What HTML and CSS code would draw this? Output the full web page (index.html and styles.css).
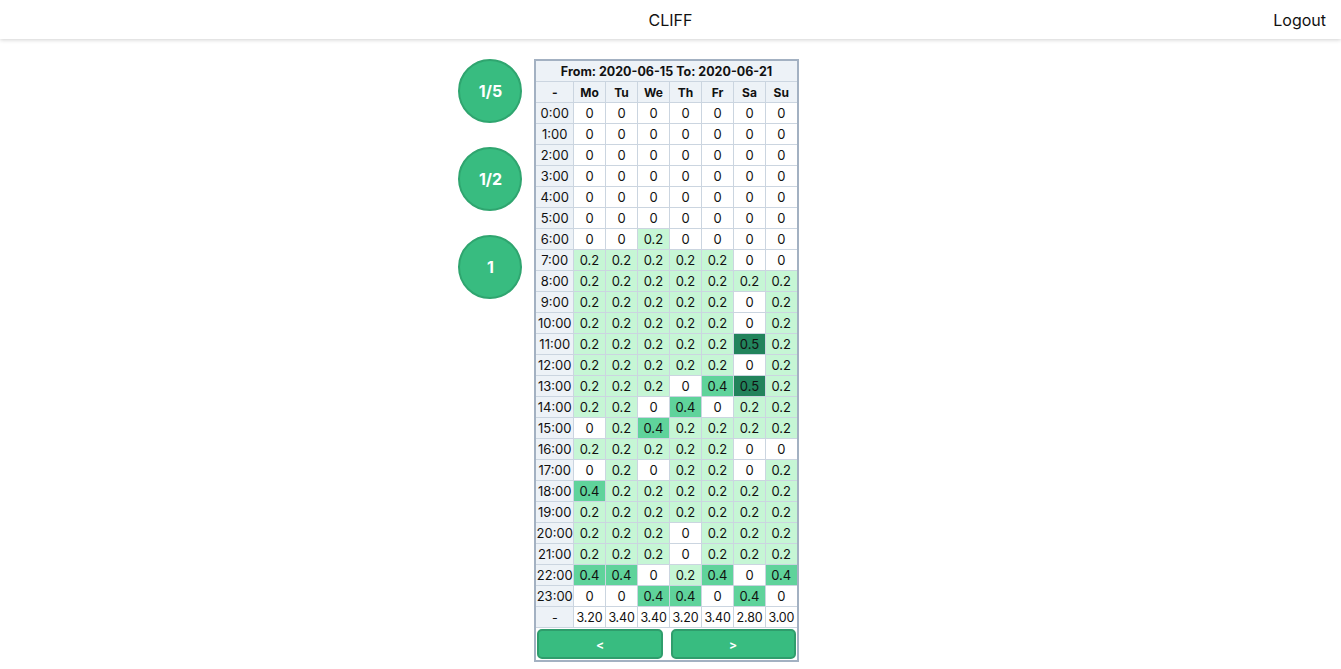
FILE: index.html
```html
<!DOCTYPE html>
<html>
<head>
<meta charset="utf-8">
<link rel="stylesheet" href="styles.css">
</head>
<body>
<header class="topbar">
  <div class="spacer"></div>
  <div class="brand">CLIFF</div>
  <div class="logout">Logout</div>
</header>
<main class="main">
  <div class="circles">
    <div class="circle">1/5</div>
    <div class="circle">1/2</div>
    <div class="circle">1</div>
  </div>
  <table class="grid">
    <colgroup><col class="c-h"><col class="c-d"><col class="c-d"><col class="c-d"><col class="c-d"><col class="c-d"><col class="c-d"><col class="c-d"></colgroup>
    <thead>
      <tr><th colspan="8" class="title">From: 2020-06-15 To: 2020-06-21</th></tr>
      <tr><th>-</th><th>Mo</th><th>Tu</th><th>We</th><th>Th</th><th>Fr</th><th>Sa</th><th>Su</th></tr>
    </thead>
    <tbody>
      <tr><td class="h">0:00</td><td>0</td><td>0</td><td>0</td><td>0</td><td>0</td><td>0</td><td>0</td></tr>
      <tr><td class="h">1:00</td><td>0</td><td>0</td><td>0</td><td>0</td><td>0</td><td>0</td><td>0</td></tr>
      <tr><td class="h">2:00</td><td>0</td><td>0</td><td>0</td><td>0</td><td>0</td><td>0</td><td>0</td></tr>
      <tr><td class="h">3:00</td><td>0</td><td>0</td><td>0</td><td>0</td><td>0</td><td>0</td><td>0</td></tr>
      <tr><td class="h">4:00</td><td>0</td><td>0</td><td>0</td><td>0</td><td>0</td><td>0</td><td>0</td></tr>
      <tr><td class="h">5:00</td><td>0</td><td>0</td><td>0</td><td>0</td><td>0</td><td>0</td><td>0</td></tr>
      <tr><td class="h">6:00</td><td>0</td><td>0</td><td class="l1">0.2</td><td>0</td><td>0</td><td>0</td><td>0</td></tr>
      <tr><td class="h">7:00</td><td class="l1">0.2</td><td class="l1">0.2</td><td class="l1">0.2</td><td class="l1">0.2</td><td class="l1">0.2</td><td>0</td><td>0</td></tr>
      <tr><td class="h">8:00</td><td class="l1">0.2</td><td class="l1">0.2</td><td class="l1">0.2</td><td class="l1">0.2</td><td class="l1">0.2</td><td class="l1">0.2</td><td class="l1">0.2</td></tr>
      <tr><td class="h">9:00</td><td class="l1">0.2</td><td class="l1">0.2</td><td class="l1">0.2</td><td class="l1">0.2</td><td class="l1">0.2</td><td>0</td><td class="l1">0.2</td></tr>
      <tr><td class="h">10:00</td><td class="l1">0.2</td><td class="l1">0.2</td><td class="l1">0.2</td><td class="l1">0.2</td><td class="l1">0.2</td><td>0</td><td class="l1">0.2</td></tr>
      <tr><td class="h">11:00</td><td class="l1">0.2</td><td class="l1">0.2</td><td class="l1">0.2</td><td class="l1">0.2</td><td class="l1">0.2</td><td class="l3">0.5</td><td class="l1">0.2</td></tr>
      <tr><td class="h">12:00</td><td class="l1">0.2</td><td class="l1">0.2</td><td class="l1">0.2</td><td class="l1">0.2</td><td class="l1">0.2</td><td>0</td><td class="l1">0.2</td></tr>
      <tr><td class="h">13:00</td><td class="l1">0.2</td><td class="l1">0.2</td><td class="l1">0.2</td><td>0</td><td class="l2">0.4</td><td class="l3">0.5</td><td class="l1">0.2</td></tr>
      <tr><td class="h">14:00</td><td class="l1">0.2</td><td class="l1">0.2</td><td>0</td><td class="l2">0.4</td><td>0</td><td class="l1">0.2</td><td class="l1">0.2</td></tr>
      <tr><td class="h">15:00</td><td>0</td><td class="l1">0.2</td><td class="l2">0.4</td><td class="l1">0.2</td><td class="l1">0.2</td><td class="l1">0.2</td><td class="l1">0.2</td></tr>
      <tr><td class="h">16:00</td><td class="l1">0.2</td><td class="l1">0.2</td><td class="l1">0.2</td><td class="l1">0.2</td><td class="l1">0.2</td><td>0</td><td>0</td></tr>
      <tr><td class="h">17:00</td><td>0</td><td class="l1">0.2</td><td>0</td><td class="l1">0.2</td><td class="l1">0.2</td><td>0</td><td class="l1">0.2</td></tr>
      <tr><td class="h">18:00</td><td class="l2">0.4</td><td class="l1">0.2</td><td class="l1">0.2</td><td class="l1">0.2</td><td class="l1">0.2</td><td class="l1">0.2</td><td class="l1">0.2</td></tr>
      <tr><td class="h">19:00</td><td class="l1">0.2</td><td class="l1">0.2</td><td class="l1">0.2</td><td class="l1">0.2</td><td class="l1">0.2</td><td class="l1">0.2</td><td class="l1">0.2</td></tr>
      <tr><td class="h">20:00</td><td class="l1">0.2</td><td class="l1">0.2</td><td class="l1">0.2</td><td>0</td><td class="l1">0.2</td><td class="l1">0.2</td><td class="l1">0.2</td></tr>
      <tr><td class="h">21:00</td><td class="l1">0.2</td><td class="l1">0.2</td><td class="l1">0.2</td><td>0</td><td class="l1">0.2</td><td class="l1">0.2</td><td class="l1">0.2</td></tr>
      <tr><td class="h">22:00</td><td class="l2">0.4</td><td class="l2">0.4</td><td>0</td><td class="l1">0.2</td><td class="l2">0.4</td><td>0</td><td class="l2">0.4</td></tr>
      <tr><td class="h">23:00</td><td>0</td><td>0</td><td class="l2">0.4</td><td class="l2">0.4</td><td>0</td><td class="l2">0.4</td><td>0</td></tr>
      <tr class="sum"><td class="h">-</td><td>3.20</td><td>3.40</td><td>3.40</td><td>3.20</td><td>3.40</td><td>2.80</td><td>3.00</td></tr>
      <tr><td colspan="8" class="navcell">
        <div class="nav"><button class="btn">&lt;</button><button class="btn">&gt;</button></div>
      </td></tr>
    </tbody>
  </table>
  <div></div>
</main>
</body>
</html>
```
FILE: styles.css
```css
html, body {
  margin: 0;
  padding: 0;
  background: #fff;
  font-family: Inter, "Liberation Sans", sans-serif;
  color: #111;
}
.topbar {
  height: 39px;
  display: grid;
  grid-template-columns: 1fr auto 1fr;
  align-items: center;
  box-shadow: 0 1px 4px rgba(0,0,0,0.18);
  font-size: 16px;
  padding: 0 15px;
}
.brand { text-align: center; }
.logout { justify-self: end; }
.main {
  display: grid;
  grid-template-columns: 1fr auto 1fr;
  padding: 20px 8px 0 0;
}
.circles {
  justify-self: end;
  display: flex;
  flex-direction: column;
  gap: 24px;
  margin-right: 12px;
}
.circle {
  width: 60px;
  height: 60px;
  border-radius: 50%;
  background: #38bc80;
  border: 2px solid #2fa56f;
  color: #fff;
  font-weight: 700;
  font-size: 16px;
  display: flex;
  align-items: center;
  justify-content: center;
}
.grid {
  border-collapse: collapse;
  table-layout: fixed;
  border: 2px solid #a3b1c2;
  font-size: 13px;
  width: 264px;
}
.c-h { width: 38px; }
.c-d { width: 32px; }
.grid th, .grid td {
  border: 1px solid #cbd5e0;
  height: 20px;
  padding: 0;
  text-align: center;
  white-space: nowrap;
  overflow: hidden;
}
.grid th {
  background: #edf2f7;
  font-weight: 700;
  font-size: 12px;
}
.grid th.title { font-size: 12.5px; }
.grid td.h { background: #edf2f7; }
.grid .l1 { background: #c6f6d5; }
.grid .l2 { background: #5fd39b; }
.grid .l3 { background: #22835c; }
.sum td { font-size: 12.5px; letter-spacing: -0.2px; }
.grid td.navcell {
  padding: 1px 0 1px;
  height: auto;
  border: 0;
}
.nav {
  display: flex;
  gap: 8px;
  padding: 0 1px;
}
.btn {
  flex: 1;
  height: 30px;
  background: #38bc80;
  border: 2px solid #2f9d6c;
  border-radius: 5px;
  color: #fff;
  font-weight: 700;
  font-family: Inter, "Liberation Sans", sans-serif;
  font-size: 12px;
  padding: 0;
}
```
